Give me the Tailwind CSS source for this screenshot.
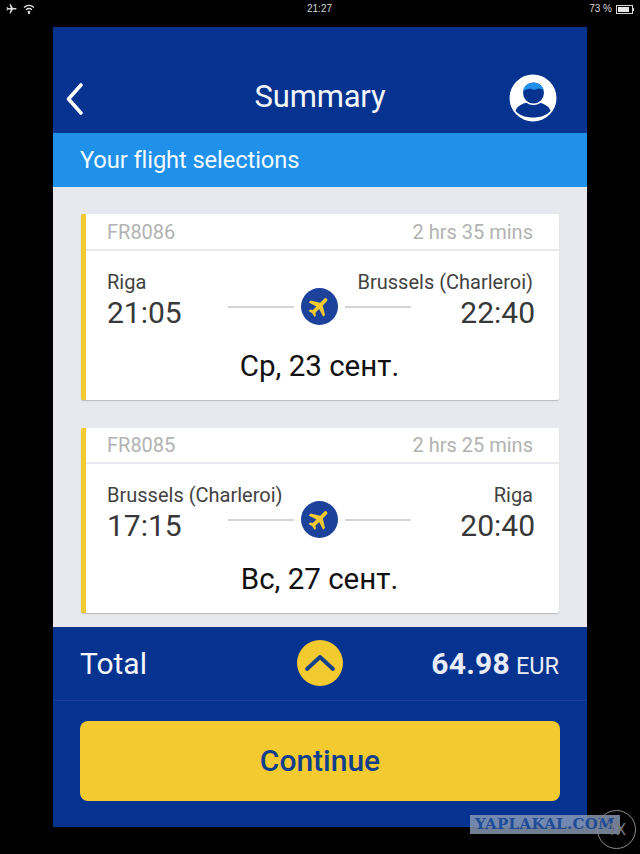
<!DOCTYPE html>
<html lang="en">
<head>
    <meta charset="UTF-8">
    <meta name="viewport" content="width=device-width, initial-scale=1.0">
    <title>Summary</title>
    <script src="https://cdn.jsdelivr.net/npm/@tailwindcss/browser@4"></script>
</head>
<body class="bg-black">
    <div class="relative w-[640px] h-[854px] overflow-hidden bg-black font-['Roboto',sans-serif]">
        <!-- ios status bar -->
        <div class="h-[27px] flex items-start justify-between pl-[5px] pr-[6px] pt-[2px] text-[10px] leading-[14px] text-[#d8d8d8]">
            <div class="flex items-center gap-[5px] h-[14px] w-[100px]">
                <svg width="13" height="12" viewBox="0 0 24 24" fill="#e0e0e0"><path d="M21 16v-2l-8-5V3.500a1.500 1.500 0 0 0-3 0V9l-8 5v2l8-2.500V19l-2 1.500V22l3.500-1 3.500 1v-1.500L13 19v-5.500z" transform="rotate(90 12 12)"/></svg>
                <svg width="12" height="10" viewBox="0 0 24 20" fill="none" stroke="#e0e0e0" stroke-width="2.600"><path d="M2 7c6-5.500 14-5.500 20 0M6 11.500c3.500-3 8.500-3 12 0M9.500 15.500c1.500-1 3.500-1 5 0"/><circle cx="12" cy="18" r="1" fill="#e0e0e0"/></svg>
            </div>
            <span class="font-['Liberation_Sans',sans-serif]">21:27</span>
            <div class="flex items-center justify-end gap-[4px] h-[14px] w-[100px] font-['Liberation_Sans',sans-serif]">
                <span>73 %</span>
                <div class="flex items-center">
                    <div class="w-[17px] h-[9px] border border-[#d8d8d8] p-[1px]"><div class="w-[11px] h-full bg-[#e8e8e8]"></div></div>
                    <div class="w-[1px] h-[3px] bg-[#d8d8d8]"></div>
                </div>
            </div>
        </div>

        <div class="ml-[53px] w-[534px] h-[800px] flex flex-col">
            <!-- header -->
            <div class="relative h-[106px] shrink-0 bg-[#05338f] flex items-end justify-between pb-[11px] pl-[12px] pr-[30px]">
                <svg class="mb-[6px]" width="22" height="34" viewBox="0 0 22 34" fill="none" stroke="#fff" stroke-width="3.600" stroke-linecap="round" stroke-linejoin="round"><path d="M16 3 3.500 17 16 31"/></svg>
                <span class="absolute left-0 right-0 bottom-[18px] text-center text-[31px] leading-[36px] tracking-[-0.2px] text-[#f4f6fb]">Summary</span>
                <svg width="48" height="48" viewBox="0 0 48 48">
                    <circle cx="24" cy="24" r="23.500" fill="#fff"/>
                    <path d="M6.500 37c1-5 8-9 17.500-9s16.500 4 17.500 9c-4 4.500-10.500 6.500-17.500 6.500S10.500 41.500 6.500 37z" fill="#05338f"/>
                    <circle cx="24.500" cy="19" r="11.200" fill="#05338f" stroke="#fff" stroke-width="1.500"/>
                    <path d="M14.200 17c.5-5 5-8.500 10.300-8.500s9.800 3.500 10.300 8.500c-2.500-2.500-4.500-3-6.500-2s-4 .8-6 0-5.500 .5-8.100 2z" fill="#2091eb"/>
                </svg>
            </div>
            <!-- sub header -->
            <div class="h-[54px] shrink-0 bg-[#2091eb] flex items-center pl-[27px] pt-[2px] text-[23.700px] text-[#f4f9fe] tracking-[-0.1px]">Your flight selections</div>

            <!-- cards -->
            <div class="h-[440px] shrink-0 bg-[#e8e9ef] pt-[27px] pl-[28px] pr-[28px] flex flex-col gap-[28px]">
                <div class="h-[186px] shrink-0 bg-white border-l-[5px] border-l-[#f3ca30] rounded-[2px] shadow-[0_1px_1px_rgba(0,0,0,0.2)] flex flex-col">
                    <div class="h-[37px] shrink-0 border-b-2 border-[#e8e9ef] flex items-center justify-between pl-[21px] pr-[26px] text-[20px] text-[#b2b2b2]">
                        <span>FR8086</span><span>2 hrs 35 mins</span>
                    </div>
                    <div class="grid grid-cols-[121px_183px_minmax(0,1fr)] pl-[21px] pr-[24px] pt-[19px]">
                        <div>
                            <div class="text-[20px] leading-[24px] text-[#424242] whitespace-nowrap">Riga</div>
                            <div class="text-[30px] leading-[38px] text-[#383838]">21:05</div>
                        </div>
                        <div class="flex items-center justify-between h-[37px] mt-[18px]">
                            <div class="w-[66px] h-[2px] bg-[#d4d4d4]"></div>
                            <div class="w-[37px] h-[37px] rounded-full bg-[#1c429c] flex items-center justify-center">
                                <svg width="25" height="25" viewBox="0 0 24 24" fill="#f3ca30"><path d="M21.500 16.500v-2.500l-8-5V3.500a1.800 1.800 0 0 0-3.600 0V9l-8 5v2.500l8-2.500V19l-2.200 1.500V22.500l4-1 4 1v-2L13.500 19v-5z" transform="rotate(45 12 12)"/></svg>
                            </div>
                            <div class="w-[66px] h-[2px] bg-[#d4d4d4]"></div>
                        </div>
                        <div class="flex flex-col items-end">
                            <div class="text-[20px] leading-[24px] text-[#424242] pr-[2px] whitespace-nowrap">Brussels (Charleroi)</div>
                            <div class="text-[30px] leading-[38px] text-[#383838]">22:40</div>
                        </div>
                    </div>
                    <div class="mt-[17px] pr-[6px] text-center text-[29.500px] leading-[34px] text-[#111]">Ср, 23 сент.</div>
                </div>

                <div class="h-[185px] shrink-0 bg-white border-l-[5px] border-l-[#f3ca30] rounded-[2px] shadow-[0_1px_1px_rgba(0,0,0,0.2)] flex flex-col">
                    <div class="h-[36px] shrink-0 border-b-2 border-[#e8e9ef] flex items-center justify-between pl-[21px] pr-[26px] text-[20px] text-[#b2b2b2]">
                        <span>FR8085</span><span>2 hrs 25 mins</span>
                    </div>
                    <div class="grid grid-cols-[121px_183px_minmax(0,1fr)] pl-[21px] pr-[24px] pt-[19px]">
                        <div>
                            <div class="text-[20px] leading-[24px] text-[#424242] whitespace-nowrap">Brussels (Charleroi)</div>
                            <div class="text-[30px] leading-[38px] text-[#383838]">17:15</div>
                        </div>
                        <div class="flex items-center justify-between h-[37px] mt-[18px]">
                            <div class="w-[66px] h-[2px] bg-[#d4d4d4]"></div>
                            <div class="w-[37px] h-[37px] rounded-full bg-[#1c429c] flex items-center justify-center">
                                <svg width="25" height="25" viewBox="0 0 24 24" fill="#f3ca30"><path d="M21.500 16.500v-2.500l-8-5V3.500a1.800 1.800 0 0 0-3.600 0V9l-8 5v2.500l8-2.500V19l-2.200 1.500V22.500l4-1 4 1v-2L13.500 19v-5z" transform="rotate(45 12 12)"/></svg>
                            </div>
                            <div class="w-[66px] h-[2px] bg-[#d4d4d4]"></div>
                        </div>
                        <div class="flex flex-col items-end">
                            <div class="text-[20px] leading-[24px] text-[#424242] pr-[2px] whitespace-nowrap">Riga</div>
                            <div class="text-[30px] leading-[38px] text-[#383838]">20:40</div>
                        </div>
                    </div>
                    <div class="mt-[17px] pr-[6px] text-center text-[29.500px] leading-[34px] text-[#111]">Вс, 27 сент.</div>
                </div>
            </div>

            <!-- total + continue -->
            <div class="h-[200px] shrink-0 bg-[#05338f] flex flex-col">
                <div class="relative h-[74px] shrink-0 border-b border-[#1a3f94] flex items-center justify-between pl-[27px] pr-[28px]">
                    <span class="text-[30px] text-[#f4f6fb]">Total</span>
                    <div class="absolute left-[244px] top-[13px] w-[46px] h-[46px] rounded-full bg-[#f3ca30] flex items-center justify-center">
                        <svg width="32" height="18" viewBox="0 0 32 18" fill="none" stroke="#123f8c" stroke-width="3.800" stroke-linecap="round" stroke-linejoin="round"><path d="M3 15 16 3l13 12"/></svg>
                    </div>
                    <div class="flex items-baseline gap-[6px] text-[#e8ecf6]">
                        <span class="text-[30px] font-bold tracking-[0.2px]">64.98</span>
                        <span class="text-[23.500px]">EUR</span>
                    </div>
                </div>
                <div class="mt-[20px] mx-[27px] h-[80px] pb-[2px] rounded-[8px] bg-[#f3ca30] flex items-center justify-center text-[30px] font-medium text-[#123f8c]">Continue</div>
            </div>
        </div>

        <!-- image host watermark and zoom button -->
        <div class="absolute left-[470px] top-[815px] w-[150px] h-[19px] bg-[#8f9db8]/80 flex items-center justify-center text-[15px] font-bold leading-none text-[#1e4c96] tracking-[0.3px] font-['DejaVu_Serif',serif] whitespace-nowrap">YAPLAKAL.COM</div>
        <div class="absolute left-[597px] top-[810px] w-[39px] h-[39px] rounded-full border border-[#8a8a8a] flex items-center justify-center text-[16px] text-[#777]">1X</div>
    </div>
</body>
</html>
